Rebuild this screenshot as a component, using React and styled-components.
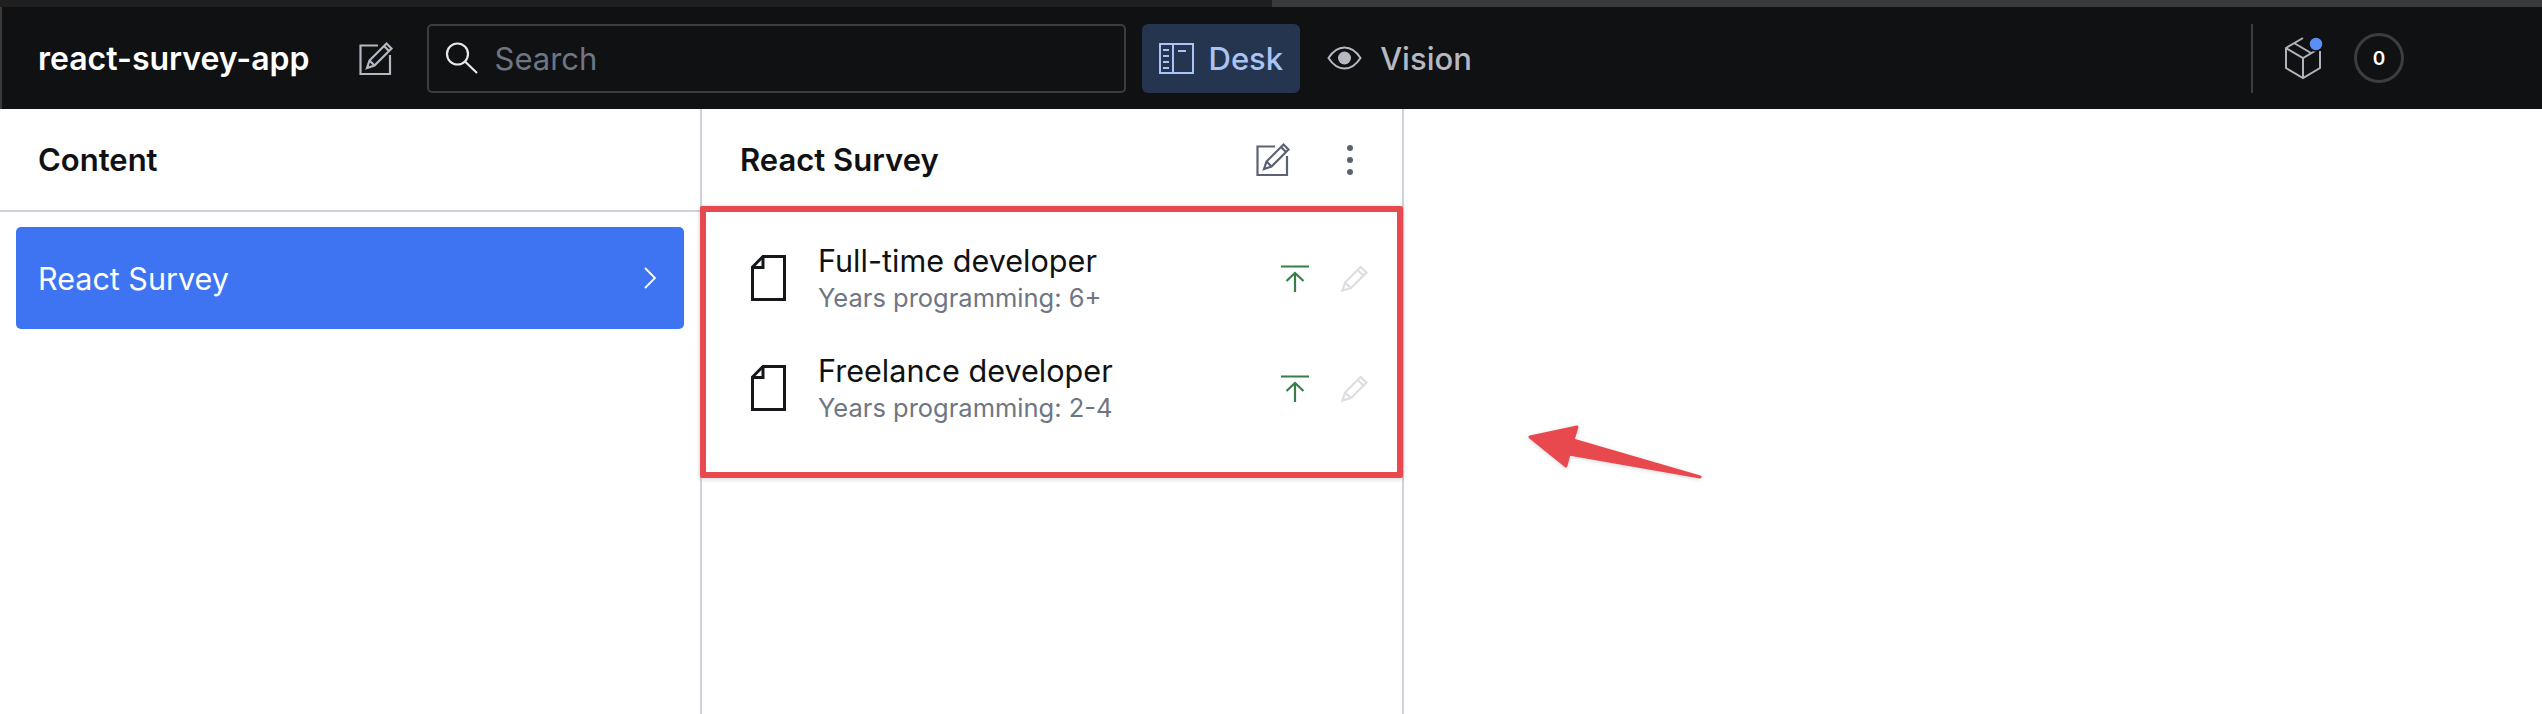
import { createGlobalStyle, styled } from "styled-components";

const rows = [
  { title: "Full-time developer", years: "6+" },
  { title: "Freelance developer", years: "2-4" },
];

export default function App() {
  return (
    <>
      <GlobalStyle />
      <Page>
        <TopStrip>
          <StripPart $width="1272px" $bg="#1f1f1f" />
          <StripPart $width="1270px" $bg="#3a3a3a" />
        </TopStrip>
        <Header>
          <Brand>react-survey-app</Brand>
          <HeaderEdit>
            <ComposeIcon color="#b4b8c2" />
          </HeaderEdit>
          <SearchBox>
            <SearchIcon />
            <SearchText>Search</SearchText>
          </SearchBox>
          <Tool $active>
            <DeskIcon />
            Desk
          </Tool>
          <Tool>
            <EyeIcon />
            Vision
          </Tool>
          <HeaderRight>
            <PackageIcon />
            <Counter>0</Counter>
          </HeaderRight>
        </Header>
        <Body>
          <Pane>
            <PaneHeader>
              <PaneTitle>Content</PaneTitle>
            </PaneHeader>
            <MenuItem>
              React Survey
              <svg width="12" height="22" viewBox="0 0 12 22" fill="none" stroke="#fff" strokeWidth="1.8">
                <path d="M1 1l10 10L1 21" />
              </svg>
            </MenuItem>
          </Pane>
          <Pane>
            <PaneHeader>
              <PaneTitle>React Survey</PaneTitle>
              <PaneActions>
                <ComposeIcon color="#5b6271" />
                <Dots>
                  <span />
                  <span />
                  <span />
                </Dots>
              </PaneActions>
            </PaneHeader>
            <DocList>
              {rows.map((row) => (
                <DocRow key={row.title}>
                  <DocIcon />
                  <DocText>
                    <DocTitle>{row.title}</DocTitle>
                    <DocSub>Years programming: {row.years}</DocSub>
                  </DocText>
                  <DocActions>
                    <PublishIcon />
                    <PencilIcon />
                  </DocActions>
                </DocRow>
              ))}
            </DocList>
          </Pane>
        </Body>
        <Highlight />
        <Arrow width="180" height="60" viewBox="0 0 180 60">
          <path
            d="M5 15L52 5L48 18L175 55L44 32L41 44Z"
            fill="#e8494f"
            stroke="#e8494f"
            strokeWidth="3"
            strokeLinejoin="round"
          />
        </Arrow>
      </Page>
    </>
  );
}

function ComposeIcon({ color }) {
  return (
    <svg width="35" height="35" viewBox="0 0 35 35" fill="none" stroke={color} strokeWidth="2.2">
      <path d="M19 4.5H1.5V33H31V14" />
      <path d="M8 27l2.5-7.5L27.5 2.5l5 5-17 17zM10.5 19.5l5 5M25 5l5 5" />
    </svg>
  );
}

function SearchIcon() {
  return (
    <svg width="33" height="32" viewBox="0 0 33 32" fill="none" stroke="#e6e8ec" strokeWidth="2.2">
      <circle cx="12.5" cy="12" r="10.5" />
      <path d="M20 19.5L32 31" />
    </svg>
  );
}

function DeskIcon() {
  return (
    <svg width="35" height="31" viewBox="0 0 35 31" fill="none" stroke="#a9c3f5" strokeWidth="2">
      <rect x="1" y="1" width="33" height="29" />
      <path d="M14 1v29M4 7h6M4 13h6M4 19h6M4 25h6M19 8h8" />
    </svg>
  );
}

function EyeIcon() {
  return (
    <svg width="35" height="24" viewBox="0 0 35 24" fill="none" stroke="#b6b9c3" strokeWidth="2">
      <path d="M1.5 12C6 5 11 1.5 17.5 1.5S29 5 33.5 12C29 19 24 22.5 17.5 22.5S6 19 1.5 12Z" />
      <circle cx="17.5" cy="12" r="6.5" fill="#b6b9c3" stroke="none" />
    </svg>
  );
}

function PackageIcon() {
  return (
    <svg width="42" height="44" viewBox="0 0 42 44" fill="none" stroke="#b0b3bc" strokeWidth="2">
      <path d="M18 2L1 12v20l17 10 17-10V15" />
      <path d="M1 12l17 10 17-10M18 22v20M9 7l17 10" />
      <circle cx="31" cy="8" r="7" fill="#5b8ff5" stroke="#101112" strokeWidth="1.5" />
    </svg>
  );
}

function DocIcon() {
  return (
    <svg width="35" height="46" viewBox="0 0 35 46" fill="none" stroke="#15171a" strokeWidth="3">
      <path d="M12 1.5h21.500v43h-32v-32.500z" />
      <path d="M12 1.500V12.500H1.500" />
    </svg>
  );
}

function PublishIcon() {
  return (
    <svg width="28" height="27" viewBox="0 0 28 27" fill="none" stroke="#3b7d48" strokeWidth="2.2">
      <path d="M0 1.500h28M14 27V8M5.500 16L14 8l8.500 8" />
    </svg>
  );
}

function PencilIcon() {
  return (
    <svg width="27" height="27" viewBox="0 0 27 27" fill="none" stroke="#dcdee2" strokeWidth="2.2">
      <path d="M1.500 25.500l2.500-8L19.500 2l6 5.500L10 23zM16.500 5l6 5.500M4 17.500l6 5.500" />
    </svg>
  );
}

const GlobalStyle = createGlobalStyle`
  html, body, #root {
    margin: 0;
    height: 100%;
  }
  body {
    background: #fff;
    font-family: Inter, "Liberation Sans", sans-serif;
    overflow: hidden;
  }
`;

const Page = styled.div`
  position: relative;
  display: flex;
  flex-direction: column;
  height: 100%;
`;

const TopStrip = styled.div`
  display: flex;
  height: 7px;
`;

const StripPart = styled.div`
  width: ${(p) => p.$width};
  background: ${(p) => p.$bg};
`;

const Header = styled.header`
  display: flex;
  align-items: center;
  height: 102px;
  padding: 0 138px 0 36px;
  background: #101112;
  border-left: 2px solid #3a3a3a;
`;

const Brand = styled.div`
  color: #fff;
  font-size: 32px;
  font-weight: 600;
`;

const HeaderEdit = styled.div`
  display: flex;
  margin-left: 49px;
`;

const SearchBox = styled.div`
  display: flex;
  align-items: center;
  gap: 17px;
  width: 699px;
  height: 69px;
  margin-left: 33px;
  padding-left: 16px;
  box-sizing: border-box;
  border: 2px solid #3b3d42;
  border-radius: 5px;
`;

const SearchText = styled.span`
  color: #6e7683;
  font-size: 31px;
`;

const Tool = styled.div`
  display: flex;
  align-items: center;
  gap: ${(p) => (p.$active ? "15px" : "18px")};
  height: 69px;
  margin-left: ${(p) => (p.$active ? "16px" : "10px")};
  padding: 0 17px;
  border-radius: 6px;
  background: ${(p) => (p.$active ? "#25344f" : "transparent")};
  color: ${(p) => (p.$active ? "#a9c3f5" : "#b6b9c3")};
  font-size: 31px;
  font-weight: 500;
`;

const HeaderRight = styled.div`
  display: flex;
  align-items: center;
  height: 69px;
  margin-left: auto;
  padding-left: 32px;
  gap: 27px;
  border-left: 2px solid #3b3d42;
`;

const Counter = styled.div`
  display: flex;
  align-items: center;
  justify-content: center;
  width: 50px;
  height: 50px;
  box-sizing: border-box;
  border: 3px solid #3b3d42;
  border-radius: 50%;
  color: #fff;
  font-size: 19px;
  font-weight: 600;
`;

const Body = styled.main`
  display: flex;
  flex: 1;
`;

const Pane = styled.section`
  width: 702px;
  box-sizing: border-box;
  border-right: 2px solid #cdd2dc;
`;

const PaneHeader = styled.div`
  display: flex;
  align-items: center;
  justify-content: space-between;
  height: 103px;
  box-sizing: border-box;
  padding: 0 49px 0 38px;
  border-bottom: 2px solid #cdd2dc;
`;

const PaneTitle = styled.h2`
  margin: 0;
  color: #101112;
  font-size: 31px;
  font-weight: 600;
`;

const PaneActions = styled.div`
  display: flex;
  align-items: center;
  gap: 56px;
`;

const Dots = styled.div`
  display: flex;
  flex-direction: column;
  gap: 6px;

  span {
    width: 6px;
    height: 6px;
    border-radius: 50%;
    background: #5b6271;
  }
`;

const MenuItem = styled.div`
  display: flex;
  align-items: center;
  justify-content: space-between;
  height: 102px;
  margin: 15px 16px;
  padding: 0 28px 0 22px;
  border-radius: 5px;
  background: #3e74f2;
  color: #fff;
  font-size: 30.5px;
`;

const DocList = styled.div`
  padding-top: 11px;
`;

const DocRow = styled.div`
  display: flex;
  align-items: center;
  height: 110px;
  padding: 0 34px 0 49px;
`;

const DocText = styled.div`
  display: flex;
  flex-direction: column;
  gap: 6px;
  margin: 0 auto 0 32px;
`;

const DocTitle = styled.div`
  color: #101112;
  font-size: 30.6px;
  line-height: 34px;
`;

const DocSub = styled.div`
  color: #6e7683;
  font-size: 25.5px;
  line-height: 28px;
`;

const DocActions = styled.div`
  display: flex;
  align-items: center;
  gap: 32px;
`;

const Highlight = styled.div`
  position: absolute;
  left: 700px;
  top: 206px;
  width: 703px;
  height: 272px;
  box-sizing: border-box;
  border: 6px solid #e8494f;
  border-radius: 2px;
  box-shadow: 0 1px 5px rgba(0, 0, 0, 0.18);
`;

const Arrow = styled.svg`
  position: absolute;
  left: 1525px;
  top: 422px;
  filter: drop-shadow(0 1px 2px rgba(0, 0, 0, 0.15));
`;
